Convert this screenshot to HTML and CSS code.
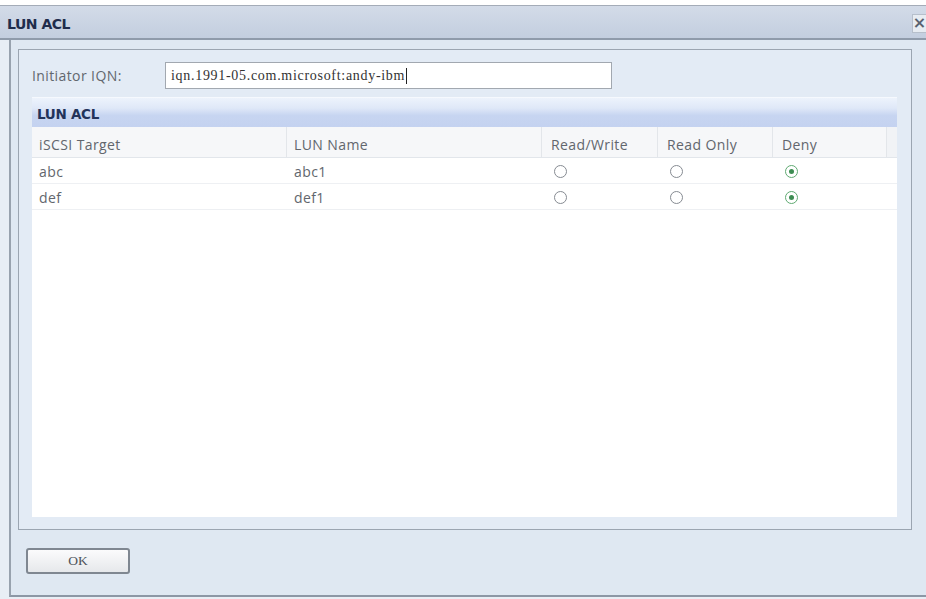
FILE: index.html
```html
<!DOCTYPE html>
<html>
<head>
<meta charset="utf-8">
<link rel="stylesheet" href="styles.css">
</head>
<body>
<div class="window">
  <div class="titlebar">
    <span class="title">LUN ACL</span>
    <span class="close">&times;</span>
  </div>
  <div class="frame">
    <div class="panel">
      <div class="iqn-row">
        <span class="iqn-label">Initiator IQN:</span>
        <div class="iqn-input">iqn.1991-05.com.microsoft:andy-ibm<span class="caret"></span></div>
      </div>
      <div class="section-header">LUN ACL</div>
      <div class="grid">
        <div class="row head">
          <div class="cell c1">iSCSI Target</div>
          <div class="cell c2">LUN Name</div>
          <div class="cell c3">Read/Write</div>
          <div class="cell c4">Read Only</div>
          <div class="cell c5">Deny</div>
          <div class="cell c6"></div>
        </div>
        <div class="row">
          <div class="cell c1">abc</div>
          <div class="cell c2">abc1</div>
          <div class="cell c3"><span class="radio"></span></div>
          <div class="cell c4"><span class="radio"></span></div>
          <div class="cell c5"><span class="radio on"></span></div>
          <div class="cell c6"></div>
        </div>
        <div class="row">
          <div class="cell c1">def</div>
          <div class="cell c2">def1</div>
          <div class="cell c3"><span class="radio"></span></div>
          <div class="cell c4"><span class="radio"></span></div>
          <div class="cell c5"><span class="radio on"></span></div>
          <div class="cell c6"></div>
        </div>
      </div>
    </div>
    <div class="footer">
      <button class="ok">OK</button>
    </div>
  </div>
</div>
</body>
</html>
```
FILE: styles.css
```css
html, body {
  margin: 0;
  padding: 0;
  background: #ffffff;
}
body {
  font-family: "Open Sans", "DejaVu Sans", sans-serif;
  color: #5a5f66;
  width: 926px;
  height: 599px;
  overflow: hidden;
}
.window {
  margin-top: 5px;
  background: #e8eef5;
  height: 594px;
}
.titlebar {
  height: 32px;
  border-top: 1px solid #a4acb8;
  border-bottom: 2px solid #8f9bab;
  background: linear-gradient(#d3dbe8, #c3cedf);
  display: flex;
  align-items: center;
  justify-content: space-between;
  box-sizing: content-box;
}
.title {
  margin-left: 7px;
  margin-top: 3px;
  font-family: "DejaVu Sans", sans-serif;
  font-weight: bold;
  font-size: 14px;
  letter-spacing: -0.5px;
  color: #1f2d4c;
}
.close {
  width: 13px;
  height: 17px;
  margin-top: 2px;
  background: #e7ecf2;
  border: 1px solid #b6bfcb;
  border-right: none;
  font-size: 16px;
  line-height: 1;
  font-weight: bold;
  color: #59626f;
  display: flex;
  align-items: center;
  justify-content: center;
  font-family: "DejaVu Sans", sans-serif;
}
.frame {
  margin-left: 9px;
  border-left: 2px solid #98a2ae;
  border-bottom: 2px solid #8c97a5;
  background: #dfe8f2;
  height: 557px;
  padding: 9px 0 0 7px;
  box-sizing: border-box;
  display: flex;
  flex-direction: column;
}
.panel {
  width: 894px;
  height: 481px;
  box-sizing: border-box;
  border: 1px solid #9ba5b1;
  background: #e3ebf5;
  padding: 12px 14px 12px 13px;
  display: flex;
  flex-direction: column;
}
.iqn-row {
  display: flex;
  align-items: center;
  height: 27px;
}
.iqn-label {
  width: 133px;
  font-size: 14px;
  letter-spacing: 0.4px;
  color: #62676e;
}
.iqn-input {
  width: 447px;
  height: 27px;
  box-sizing: border-box;
  border: 1px solid #a2a8b0;
  background: #ffffff;
  font-family: "Liberation Serif", serif;
  font-size: 14px;
  color: #333;
  padding-left: 5px;
  display: flex;
  align-items: center;
  letter-spacing: 0.7px;
}
.caret {
  display: inline-block;
  width: 1px;
  height: 16px;
  background: #222;
  margin-left: 1px;
}
.section-header {
  margin-top: 8px;
  height: 30px;
  box-sizing: border-box;
  background: linear-gradient(#edf3fc 0%, #dfe8f8 35%, #c7d5f1 60%, #c4d2f0 100%);
  border-top: 1px solid #f6f9fe;
  font-family: "DejaVu Sans", sans-serif;
  font-weight: bold;
  font-size: 13.5px;
  letter-spacing: -0.3px;
  color: #22335a;
  padding-left: 5px;
  padding-top: 2px;
  display: flex;
  align-items: center;
}
.grid {
  flex: 1;
  background: #ffffff;
  display: flex;
  flex-direction: column;
}
.row {
  display: flex;
  height: 26px;
  border-bottom: 1px solid #eef0f3;
  box-sizing: border-box;
  font-size: 14px;
  letter-spacing: 0.4px;
  color: #62666d;
}
.row.head {
  height: 31px;
  background: #f6f7f9;
  border-bottom: 1px solid #e2e6eb;
}
.cell {
  display: flex;
  align-items: center;
  padding-left: 7px;
  padding-top: 2px;
  box-sizing: border-box;
}
.head .cell {
  border-right: 1px solid #e3e6ea;
  padding-top: 4px;
}
.head .cell.c6 {
  border-right: none;
  background: #f1f3f6;
}
.c1 { width: 255px; }
.c2 { width: 255px; }
.c3 { width: 116px; padding-left: 9px; }
.c4 { width: 115px; padding-left: 9px; }
.c5 { width: 114px; padding-left: 9px; }
.c6 { flex: 1; padding-left: 0; }
.radio {
  width: 13px;
  height: 13px;
  box-sizing: border-box;
  border: 1.5px solid #868b92;
  border-radius: 50%;
  background: #fff;
  margin-left: 3px;
  display: flex;
  align-items: center;
  justify-content: center;
}
.radio.on {
  border-color: #5faa72;
}
.radio.on::after {
  content: "";
  width: 5px;
  height: 5px;
  border-radius: 50%;
  background: #3d8c52;
}
.footer {
  padding: 18px 0 0 8px;
}
.ok {
  width: 104px;
  height: 26px;
  border: 2px solid #7f8791;
  border-radius: 3px;
  background: linear-gradient(#fbfbfc, #e6e8eb);
  font-family: "Liberation Serif", serif;
  font-size: 13.5px;
  color: #4e535a;
  padding: 0;
}
```
